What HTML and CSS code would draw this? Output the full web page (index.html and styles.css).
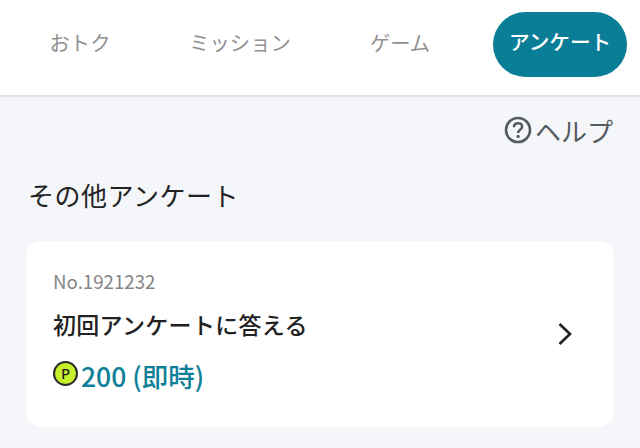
FILE: index.html
```html
<!DOCTYPE html>
<html lang="ja">
<head>
<meta charset="utf-8">
<title>アンケート</title>
<link rel="stylesheet" href="styles.css">
</head>
<body>
<nav class="tabs">
  <a class="tab">おトク</a>
  <a class="tab">ミッション</a>
  <a class="tab">ゲーム</a>
  <a class="tab active">アンケート</a>
</nav>
<main class="content">
  <div class="help">
    <svg class="help-icon" viewBox="0 0 28 28" width="28" height="28" aria-hidden="true">
      <circle cx="14" cy="14" r="12" fill="none" stroke="#555b60" stroke-width="2.6"/>
      <path d="M9.9 11.2c0-2.4 1.8-3.9 4.2-3.9s4 1.4 4 3.5c0 3-4 3.1-4 6.1" fill="none" stroke="#555b60" stroke-width="2.5"/>
      <circle cx="14.1" cy="20.4" r="1.6" fill="#555b60"/>
    </svg>
    <span>ヘルプ</span>
  </div>
  <h2 class="section-title">その他アンケート</h2>
  <section class="card">
    <div class="card-body">
      <div class="number">No.1921232</div>
      <div class="card-title">初回アンケートに答える</div>
      <div class="reward">
        <span class="coin">P</span>
        <span class="points">200 (即時)</span>
      </div>
    </div>
    <svg class="chevron" viewBox="0 0 16 24" width="16" height="24" aria-hidden="true">
      <path d="M2.5 2 13 12 2.5 22" fill="none" stroke="#222" stroke-width="2.6"/>
    </svg>
  </section>
</main>
</body>
</html>
```
FILE: styles.css
```css
* { box-sizing: border-box; }
html, body { margin: 0; height: 100%; }
body {
  width: 640px;
  height: 448px;
  overflow: hidden;
  background: #f4f6fa;
  font-family: "Noto Sans CJK JP", "Noto Sans", sans-serif;
  color: #222;
}
.tabs {
  height: 97px;
  background: #fff;
  border-bottom: 2px solid #e1e3e5;
  display: grid;
  grid-template-columns: repeat(4, 160px);
  align-items: start;
  padding-top: 12px;
}
.tab {
  height: 65px;
  width: 134px;
  justify-self: center;
  display: flex;
  align-items: center;
  justify-content: center;
  padding-bottom: 6px;
  font-size: 20.3px;
  color: #919191;
}
.tab.active {
  padding-bottom: 8px;
  border-radius: 33px;
  background: #0a7e96;
  color: #fff;
  font-weight: 500;
  font-size: 20.6px;
}
.content { padding: 0 26px; }
.help {
  display: flex;
  justify-content: flex-end;
  align-items: center;
  height: 36px;
  margin-top: 15px;
  color: #555b60;
  font-size: 26px;
  padding-right: 1px;
  gap: 3px;
}
.section-title {
  margin: 29px 0 0 2px;
  font-size: 26px;
  letter-spacing: 0.5px;
  line-height: 36px;
  font-weight: 400;
  color: #222;
}
.card {
  margin-top: 28px;
  width: 588px;
  height: 186px;
  background: #fff;
  border-radius: 16px;
  display: flex;
  align-items: center;
  justify-content: space-between;
  padding: 0 41px 0 27px;
}
.card-body { align-self: flex-start; padding-top: 27px; }
.number { font-size: 18.7px; line-height: 26px; color: #858585; font-weight: 400; }
.card-title { margin-top: 14px; font-size: 23px; letter-spacing: 0.3px; line-height: 32px; font-weight: 500; color: #222; }
.reward { margin-top: 18px; display: flex; align-items: center; gap: 3px; }
.coin {
  width: 25px; height: 25px; border-radius: 50%;
  margin-top: -6px;
  background: #c6ee2b; border: 2px solid #2a2a2a;
  font: 500 15px/21px "Noto Sans", sans-serif;
  text-align: center; color: #222;
}
.points { font-size: 26.5px; line-height: 36px; font-weight: 500; color: #0f8098; }
.chevron { display: block; }
```
